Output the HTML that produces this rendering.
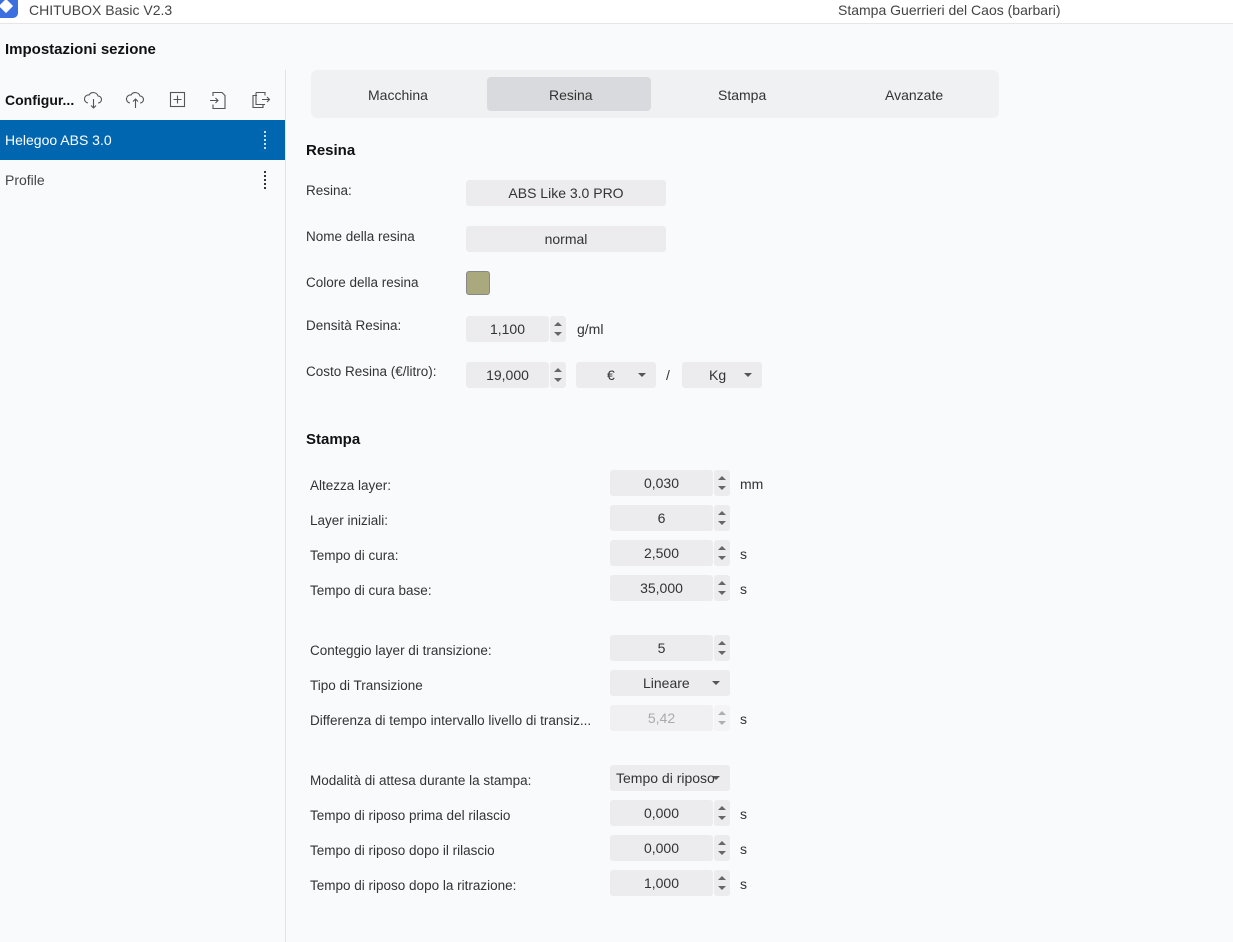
<!DOCTYPE html><html><head><meta charset="utf-8"><style>
*{margin:0;padding:0;box-sizing:border-box}
body{width:1233px;height:942px;background:#f9fafc;font-family:"Liberation Sans",sans-serif;font-size:14px;color:#333;position:relative;overflow:hidden}
.a{position:absolute;white-space:nowrap}
.lbl{position:absolute;font-size:13.5px;color:#333;white-space:nowrap}
.in{position:absolute;background:#ececee;border-radius:3px;text-align:center;font-size:14px;color:#333}
.sp{position:absolute;background:#ececee;border-radius:3px;width:16px}
.sp:before{content:"";position:absolute;left:4px;top:6px;border:4px solid transparent;border-bottom:4px solid #666;border-top:0}
.sp:after{content:"";position:absolute;left:4px;bottom:6px;border:4px solid transparent;border-top:4px solid #666;border-bottom:0}
.dd:after{content:"";position:absolute;right:10px;top:11px;border:4px solid transparent;border-top:4px solid #555;border-bottom:0}
.u{position:absolute;font-size:14px;color:#333}
</style></head><body>
<div class="a" style="left:0;top:0;width:1233px;height:24px;background:#fff;border-bottom:1px solid #e6e6e6"></div>
<div class="a" style="left:-4px;top:-4px;width:22px;height:22px;background:#3b6fe0;border-radius:5px"></div>
<div class="a" style="left:1px;top:1px;width:10px;height:10px;background:#fff;transform:rotate(45deg)"></div>
<div class="a" style="left:29px;top:2px;font-size:14px;color:#444">CHITUBOX Basic V2.3</div>
<div class="a" style="left:838px;top:2px;font-size:14px;color:#444">Stampa Guerrieri del Caos (barbari)</div>
<div class="a" style="left:5px;top:41px;font-size:15px;font-weight:bold;color:#111">Impostazioni sezione</div>
<div class="a" style="left:285px;top:70px;width:1px;height:872px;background:#e2e3e6"></div>
<div class="a" style="left:5px;top:92px;font-size:14px;font-weight:bold;color:#111">Configur...</div>
<svg class="a" style="left:84px;top:90px" width="190" height="22" fill="none" stroke="#555" stroke-width="1.1">
<path d="M4 13a4 4 0 0 1 1-8 5 5 0 0 1 9 1 3.5 3.5 0 0 1 0 7M9.5 9v9M7 15.5l2.5 2.5 2.5-2.5"/>
<path d="M46 13a4 4 0 0 1 1-8 5 5 0 0 1 9 1 3.5 3.5 0 0 1 0 7M51.5 18V9M49 11.5l2.5-2.5 2.5 2.5"/>
<rect x="86.5" y="2.5" width="14" height="14"/><path d="M93.5 5.5v8M89.5 9.5h8"/>
<path d="M129 6V2.5h9l3 3v13h-12v-4M126 10.5h8M131.5 8l2.5 2.5-2.5 2.5"/>
<path d="M173 5.5h-4v12h10v-3M172 2.5h9v3M172 2.5v12h9M178 9.5h7M183 7l2.5 2.5-2.5 2.5"/>
</svg>
<div class="a" style="left:0;top:120px;width:285px;height:40px;background:#0066b0"></div>
<div class="a" style="left:5px;top:132px;font-size:14px;color:#fff">Helegoo ABS 3.0</div>
<div class="a" style="left:264px;top:131px;width:2px;height:18px;border-left:2px dotted #cde"></div>
<div class="a" style="left:5px;top:172px;font-size:14px;color:#444">Profile</div>
<div class="a" style="left:264px;top:171px;width:2px;height:18px;border-left:2px dotted #333"></div>
<div class="a" style="left:311px;top:70px;width:688px;height:48px;background:#f0f1f3;border-radius:6px"></div>
<div class="a" style="left:487px;top:77px;width:164px;height:34px;background:#d9dadd;border-radius:4px"></div>
<div class="a" style="left:368px;top:87px">Macchina</div>
<div class="a" style="left:549px;top:87px">Resina</div>
<div class="a" style="left:718px;top:87px">Stampa</div>
<div class="a" style="left:885px;top:87px">Avanzate</div>
<div class="a" style="left:306px;top:142px;font-size:15px;font-weight:bold;color:#111">Resina</div>
<div class="lbl" style="left:306px;top:183px">Resina:</div>
<div class="in" style="left:466px;top:180px;width:200px;height:26px;line-height:26px">ABS Like 3.0 PRO</div>
<div class="lbl" style="left:306px;top:229px">Nome della resina</div>
<div class="in" style="left:466px;top:226px;width:200px;height:26px;line-height:26px">normal</div>
<div class="lbl" style="left:306px;top:275px">Colore della resina</div>
<div class="a" style="left:466px;top:271px;width:24px;height:24px;background:#a9a97d;border:1px solid #888;border-radius:3px"></div>
<div class="lbl" style="left:306px;top:318px">Densità Resina:</div>
<div class="in" style="left:466px;top:316px;width:83px;height:26px;line-height:26px">1,100</div><div class="sp" style="left:550px;top:316px;height:26px"></div>
<div class="u" style="left:577px;top:321px">g/ml</div>
<div class="lbl" style="left:306px;top:364px">Costo Resina (€/litro):</div>
<div class="in" style="left:466px;top:362px;width:83px;height:26px;line-height:26px">19,000</div><div class="sp" style="left:550px;top:362px;height:26px"></div>
<div class="in dd" style="left:576px;top:362px;width:80px;height:26px;line-height:26px;text-align:left;padding-left:31px">€</div>
<div class="u" style="left:666px;top:367px">/</div>
<div class="in dd" style="left:682px;top:362px;width:80px;height:26px;line-height:26px;text-align:left;padding-left:27px">Kg</div>
<div class="a" style="left:306px;top:431px;font-size:15px;font-weight:bold;color:#111">Stampa</div>
<div class="lbl" style="left:310px;top:478px">Altezza layer:</div>
<div class="in" style="left:610px;top:470px;width:103px;height:26px;line-height:26px">0,030</div><div class="sp" style="left:714px;top:470px;height:26px"></div><div class="u" style="left:740px;top:476px">mm</div>
<div class="lbl" style="left:310px;top:513px">Layer iniziali:</div>
<div class="in" style="left:610px;top:505px;width:103px;height:26px;line-height:26px">6</div><div class="sp" style="left:714px;top:505px;height:26px"></div>
<div class="lbl" style="left:310px;top:548px">Tempo di cura:</div>
<div class="in" style="left:610px;top:540px;width:103px;height:26px;line-height:26px">2,500</div><div class="sp" style="left:714px;top:540px;height:26px"></div><div class="u" style="left:740px;top:546px">s</div>
<div class="lbl" style="left:310px;top:583px">Tempo di cura base:</div>
<div class="in" style="left:610px;top:575px;width:103px;height:26px;line-height:26px">35,000</div><div class="sp" style="left:714px;top:575px;height:26px"></div><div class="u" style="left:740px;top:581px">s</div>
<div class="lbl" style="left:310px;top:643px">Conteggio layer di transizione:</div>
<div class="in" style="left:610px;top:635px;width:103px;height:26px;line-height:26px">5</div><div class="sp" style="left:714px;top:635px;height:26px"></div>
<div class="lbl" style="left:310px;top:678px">Tipo di Transizione</div>
<div class="in dd" style="left:610px;top:670px;width:120px;height:26px;line-height:26px;text-align:left;padding-left:33px">Lineare</div>
<div class="lbl" style="left:310px;top:713px">Differenza di tempo intervallo livello di transiz...</div>
<div class="in" style="left:610px;top:705px;width:103px;height:26px;line-height:26px;color:#aaa;background:#f0f0f2">5,42</div><div class="sp" style="left:714px;top:705px;height:26px;background:#f0f0f2;opacity:.5"></div><div class="u" style="left:740px;top:711px">s</div>
<div class="lbl" style="left:310px;top:773px">Modalità di attesa durante la stampa:</div>
<div class="in dd" style="left:610px;top:765px;width:120px;height:26px;line-height:26px;text-align:left;padding-left:6px">Tempo di riposo</div>
<div class="lbl" style="left:310px;top:808px">Tempo di riposo prima del rilascio</div>
<div class="in" style="left:610px;top:800px;width:103px;height:26px;line-height:26px">0,000</div><div class="sp" style="left:714px;top:800px;height:26px"></div><div class="u" style="left:740px;top:806px">s</div>
<div class="lbl" style="left:310px;top:843px">Tempo di riposo dopo il rilascio</div>
<div class="in" style="left:610px;top:835px;width:103px;height:26px;line-height:26px">0,000</div><div class="sp" style="left:714px;top:835px;height:26px"></div><div class="u" style="left:740px;top:841px">s</div>
<div class="lbl" style="left:310px;top:878px">Tempo di riposo dopo la ritrazione:</div>
<div class="in" style="left:610px;top:870px;width:103px;height:26px;line-height:26px">1,000</div><div class="sp" style="left:714px;top:870px;height:26px"></div><div class="u" style="left:740px;top:876px">s</div>
</body></html>
